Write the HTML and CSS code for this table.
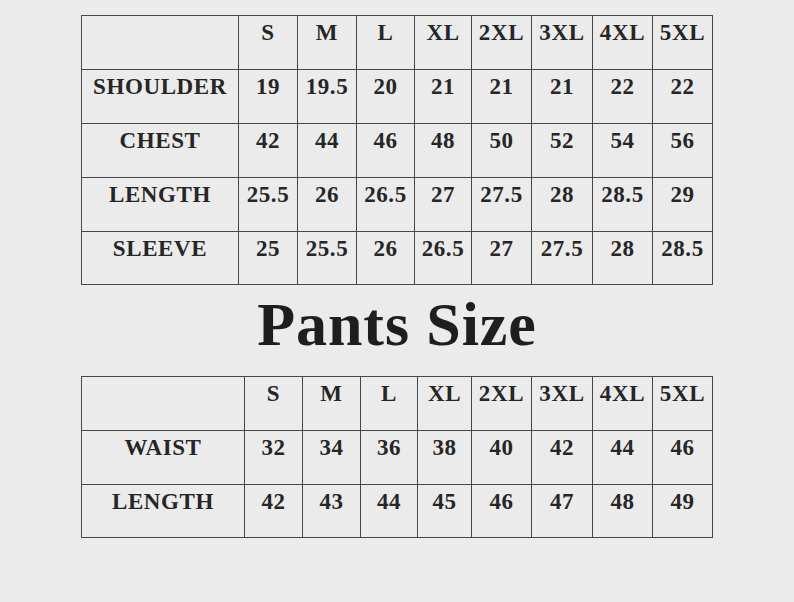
FILE: index.html
```html
<!DOCTYPE html>
<html>
<head>
<meta charset="utf-8">
<link rel="stylesheet" href="styles.css">
</head>
<body>
<div class="page">
  <table class="chart top">
    <colgroup>
      <col class="c0"><col class="c1"><col class="c2"><col class="c3"><col class="c4"><col class="c5"><col class="c6"><col class="c7"><col class="c8">
    </colgroup>
    <tr><td></td><td>S</td><td>M</td><td>L</td><td>XL</td><td>2XL</td><td>3XL</td><td>4XL</td><td>5XL</td></tr>
    <tr><td>SHOULDER</td><td>19</td><td>19.5</td><td>20</td><td>21</td><td>21</td><td>21</td><td>22</td><td>22</td></tr>
    <tr><td>CHEST</td><td>42</td><td>44</td><td>46</td><td>48</td><td>50</td><td>52</td><td>54</td><td>56</td></tr>
    <tr><td>LENGTH</td><td>25.5</td><td>26</td><td>26.5</td><td>27</td><td>27.5</td><td>28</td><td>28.5</td><td>29</td></tr>
    <tr class="last"><td>SLEEVE</td><td>25</td><td>25.5</td><td>26</td><td>26.5</td><td>27</td><td>27.5</td><td>28</td><td>28.5</td></tr>
  </table>
  <h1 class="title">Pants Size</h1>
  <table class="chart bottom">
    <colgroup>
      <col class="b0"><col class="b1"><col class="b2"><col class="b3"><col class="b4"><col class="b5"><col class="b6"><col class="b7"><col class="b8">
    </colgroup>
    <tr><td></td><td>S</td><td>M</td><td>L</td><td>XL</td><td>2XL</td><td>3XL</td><td>4XL</td><td>5XL</td></tr>
    <tr><td>WAIST</td><td>32</td><td>34</td><td>36</td><td>38</td><td>40</td><td>42</td><td>44</td><td>46</td></tr>
    <tr class="last"><td>LENGTH</td><td>42</td><td>43</td><td>44</td><td>45</td><td>46</td><td>47</td><td>48</td><td>49</td></tr>
  </table>
</div>
</body>
</html>
```
FILE: styles.css
```css
html, body {
  margin: 0;
  padding: 0;
  background: #ebebeb;
}
.page {
  padding: 15px 0 0 81px;
  font-family: "Liberation Serif", "Times New Roman", serif;
  color: #262626;
}
.chart {
  border-collapse: collapse;
  table-layout: fixed;
  width: 632px;
}
.chart td {
  border: 1px solid #474747;
  height: 54px;
  padding: 5px 0 0 0;
  box-sizing: border-box;
  vertical-align: top;
  text-align: center;
  font-size: 23px;
  font-weight: bold;
  line-height: 23px;
  letter-spacing: 0.6px;
  white-space: nowrap;
}
.chart tr.last td { height: 53px; }
.c0 { width: 157px; }
.c1 { width: 59px; }
.c2 { width: 59px; }
.c3 { width: 58px; }
.c4 { width: 57px; }
.c5 { width: 60px; }
.c6 { width: 61px; }
.c7 { width: 60px; }
.c8 { width: 60px; }
.b0 { width: 163px; }
.b1 { width: 58px; }
.b2 { width: 58px; }
.b3 { width: 57px; }
.b4 { width: 54px; }
.b5 { width: 60px; }
.b6 { width: 61px; }
.b7 { width: 60px; }
.b8 { width: 60px; }
.title {
  width: 632px;
  margin: 8px 0 21px 0;
  text-align: center;
  font-size: 62px;
  line-height: 62px;
  font-weight: bold;
  letter-spacing: 0.9px;
  color: #1e1e1e;
}
```
